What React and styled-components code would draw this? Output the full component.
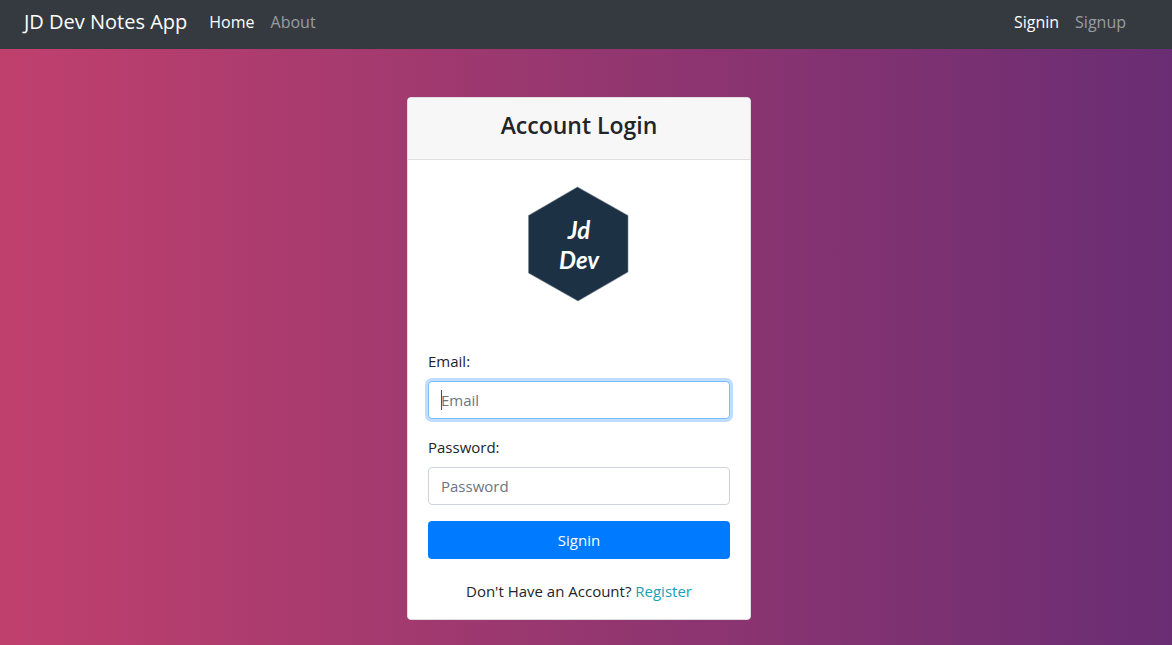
import React from "react";
import styled, { createGlobalStyle, css } from "styled-components";

const GlobalStyle = createGlobalStyle`
  *, *::before, *::after { box-sizing: border-box; }
  body {
    margin: 0;
    color: #212529;
    font-family: "Segoe UI", "Open Sans", "Noto Sans", sans-serif;
    font-size: 15px;
    line-height: 24px;
  }
`;

const Page = styled.div`
  display: flex;
  flex-direction: column;
  min-height: 100vh;
  background: linear-gradient(to right, #c0406d, #6a2d73);
`;

const Navbar = styled.nav`
  display: flex;
  align-items: center;
  padding: 2px 38px 7px 24px;
  background: #343a40;
`;

const Brand = styled.a`
  margin-right: 14px;
  color: #fff;
  font-size: 20px;
  line-height: 30px;
  text-decoration: none;
  white-space: nowrap;
`;

const NavList = styled.ul`
  display: flex;
  margin: 0;
  padding: 0;
  list-style: none;

  & + & {
    margin-left: auto;
  }
`;

const NavLink = styled.a`
  display: block;
  padding: 8px;
  color: ${({ $active }) => ($active ? "#fff" : "rgba(255, 255, 255, 0.5)")};
  font-size: 16px;
  text-decoration: none;
`;

const Main = styled.main`
  display: flex;
  justify-content: center;
  padding: 48px 14px 24px 0;
`;

const Card = styled.section`
  width: 100%;
  max-width: 344px;
  background: #fff;
  border: 1px solid #dfdfdf;
  border-radius: 4px;
  overflow: hidden;
`;

const CardHeader = styled.header`
  padding: 13px 20px 19px;
  background: #f7f7f7;
  border-bottom: 1px solid #dfdfdf;
`;

const Title = styled.h1`
  margin: 0;
  font-size: 23px;
  font-weight: 600;
  line-height: 29px;
  text-align: center;
`;

const CardBody = styled.div`
  display: flex;
  flex-direction: column;
  padding: 20px 20px 16px;
`;

const Logo = styled.svg`
  display: block;
  width: 128px;
  height: 128px;
  margin: 0 auto 41px;
`;

const LogoText = styled.text`
  fill: #fff;
  font-family: "Segoe Script", "Brush Script MT", "Lato", cursive;
  font-size: 24px;
  font-style: italic;
  font-weight: 700;
  text-anchor: middle;
`;

const Form = styled.form`
  display: flex;
  flex-direction: column;
  gap: 16px;
`;

const Field = styled.div`
  display: flex;
  flex-direction: column;
  gap: 8px;
`;

const InputWrap = styled.div`
  position: relative;
  display: flex;
`;

const focusRing = css`
  border-color: #80bdff;
  box-shadow: 0 0 0 3px rgba(0, 123, 255, 0.25);
`;

const Input = styled.input`
  width: 100%;
  height: 38px;
  padding: 6px 12px;
  color: #495057;
  caret-color: transparent;
  font: inherit;
  background: #fff;
  border: 1px solid #ced4da;
  border-radius: 4px;
  outline: 0;

  &::placeholder {
    color: #6c757d;
    opacity: 1;
  }

  &:focus {
    ${focusRing}
  }
`;

const Caret = styled.span`
  position: absolute;
  top: 9px;
  left: 13px;
  width: 1px;
  height: 20px;
  background: #495057;
`;

const SubmitButton = styled.button`
  height: 38px;
  color: #fff;
  font: inherit;
  background: #007bff;
  border: 0;
  border-radius: 4px;
  cursor: pointer;
`;

const Footnote = styled.p`
  margin: 20px 0 0;
  text-align: center;
`;

const RegisterLink = styled.a`
  color: #17a2b8;
  text-decoration: none;
`;

export default function App() {
  return (
    <Page>
      <GlobalStyle />
      <Navbar>
        <Brand href="#">JD Dev Notes App</Brand>
        <NavList>
          <li><NavLink href="#home" $active>Home</NavLink></li>
          <li><NavLink href="#about">About</NavLink></li>
        </NavList>
        <NavList>
          <li><NavLink href="#signin" $active>Signin</NavLink></li>
          <li><NavLink href="#signup">Signup</NavLink></li>
        </NavList>
      </Navbar>
      <Main>
        <Card>
          <CardHeader>
            <Title>Account Login</Title>
          </CardHeader>
          <CardBody>
            <Logo viewBox="0 0 128 128" role="img" aria-label="Jd Dev">
              <path d="M62.5 7 L113 35.5 V92 L63 121 L13.5 93 V35.5 Z" fill="#1d3144" stroke="#7b8792" strokeWidth="0.6" />
              <LogoText x="64" y="59">Jd</LogoText>
              <LogoText x="64" y="89">Dev</LogoText>
            </Logo>
            <Form>
              <Field>
                <label htmlFor="email">Email:</label>
                <InputWrap>
                  <Input id="email" type="email" placeholder="Email" autoFocus />
                  <Caret />
                </InputWrap>
              </Field>
              <Field>
                <label htmlFor="password">Password:</label>
                <Input id="password" type="password" placeholder="Password" />
              </Field>
              <SubmitButton type="submit">Signin</SubmitButton>
            </Form>
            <Footnote>
              Don't Have an Account? <RegisterLink href="#register">Register</RegisterLink>
            </Footnote>
          </CardBody>
        </Card>
      </Main>
    </Page>
  );
}
